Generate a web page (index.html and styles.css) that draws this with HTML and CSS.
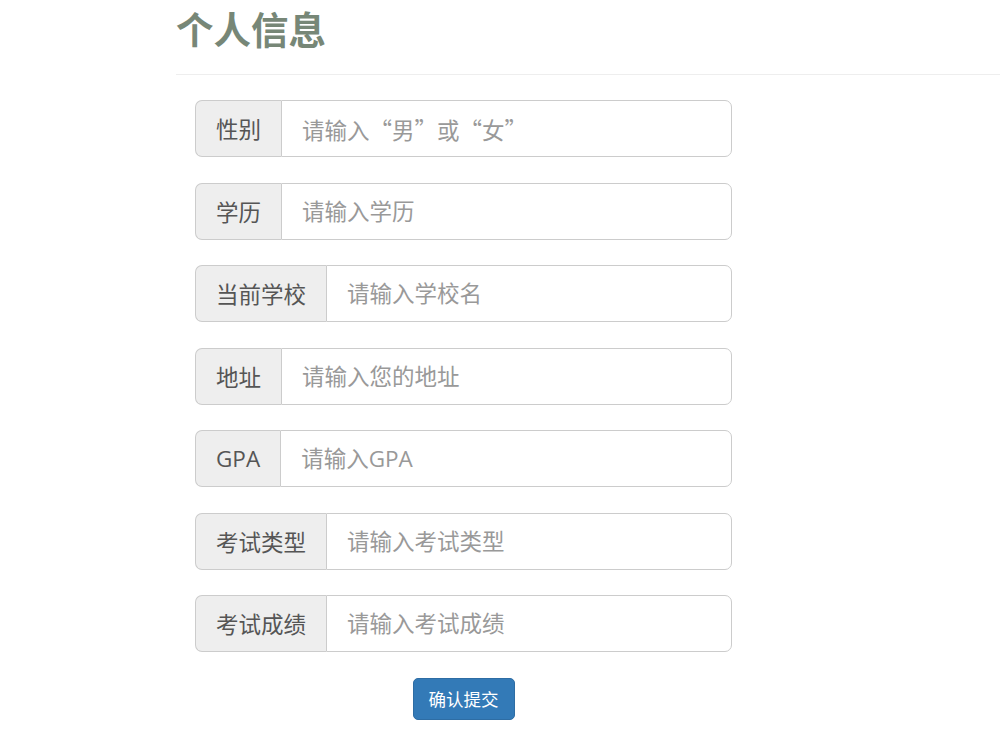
FILE: index.html
```html
<!DOCTYPE html>
<html lang="zh-CN">
<head>
<meta charset="utf-8">
<title>个人信息</title>
<link rel="stylesheet" href="styles.css">
</head>
<body>
<div class="container">
  <div class="page-header">
    <h2>个人信息</h2>
  </div>
  <form class="form">
    <div class="input-group">
      <span class="addon">性别</span>
      <input class="control control-cjk" type="text" placeholder="请输入“男”或“女”">
    </div>
    <div class="input-group">
      <span class="addon">学历</span>
      <input class="control" type="text" placeholder="请输入学历">
    </div>
    <div class="input-group">
      <span class="addon">当前学校</span>
      <input class="control" type="text" placeholder="请输入学校名">
    </div>
    <div class="input-group">
      <span class="addon">地址</span>
      <input class="control" type="text" placeholder="请输入您的地址">
    </div>
    <div class="input-group">
      <span class="addon">GPA</span>
      <input class="control" type="text" placeholder="请输入GPA">
    </div>
    <div class="input-group">
      <span class="addon">考试类型</span>
      <input class="control" type="text" placeholder="请输入考试类型">
    </div>
    <div class="input-group">
      <span class="addon">考试成绩</span>
      <input class="control" type="text" placeholder="请输入考试成绩">
    </div>
    <div class="actions">
      <button type="button" class="btn">确认提交</button>
    </div>
  </form>
</div>
</body>
</html>
```

FILE: styles.css
```css
* { box-sizing: border-box; }
html, body {
  margin: 0;
  padding: 0;
  background: #fff;
  font-family: "Open Sans", "Noto Sans CJK SC", sans-serif;
  color: #333;
}
.container {
  margin-left: 176px;
}
.page-header {
  border-bottom: 1px solid #eee;
  padding-bottom: 26px;
}
.page-header h2 {
  margin: 7px 0 0 0;
  font-family: "Noto Sans CJK SC", sans-serif;
  font-size: 37.5px;
  line-height: 41px;
  font-weight: 700;
  color: #778777;
}
.form {
  margin: 25px 0 0 19px;
  width: 537px;
  display: flex;
  flex-direction: column;
  gap: 25.5px;
}
.input-group {
  display: flex;
  height: 57px;
}
.addon {
  display: flex;
  align-items: center;
  padding: 0 20px;
  background: #eee;
  border: 1px solid #ccc;
  border-right: 0;
  border-radius: 7px 0 0 7px;
  font-family: "Open Sans", "Noto Sans CJK SC", sans-serif;
  font-size: 22.5px;
  color: #555;
  white-space: nowrap;
}
.control {
  flex: 1;
  min-width: 0;
  height: 57px;
  margin: 0;
  padding: 0 20px;
  border: 1px solid #ccc;
  border-radius: 0 7px 7px 0;
  font-family: "Open Sans", "Noto Sans CJK SC", sans-serif;
  font-size: 22.5px;
  color: #555;
  outline: none;
  background: #fff;
}
.control-cjk {
  font-family: "Noto Sans CJK SC", sans-serif;
}
.control::placeholder {
  color: #999;
}
.actions {
  display: flex;
  justify-content: center;
}
.btn {
  height: 42px;
  padding: 0 15px;
  background: #337ab7;
  border: 1px solid #2e6da4;
  border-radius: 5px;
  color: #fff;
  font-family: "Noto Sans CJK SC", sans-serif;
  font-size: 17.5px;
  cursor: pointer;
}
```
